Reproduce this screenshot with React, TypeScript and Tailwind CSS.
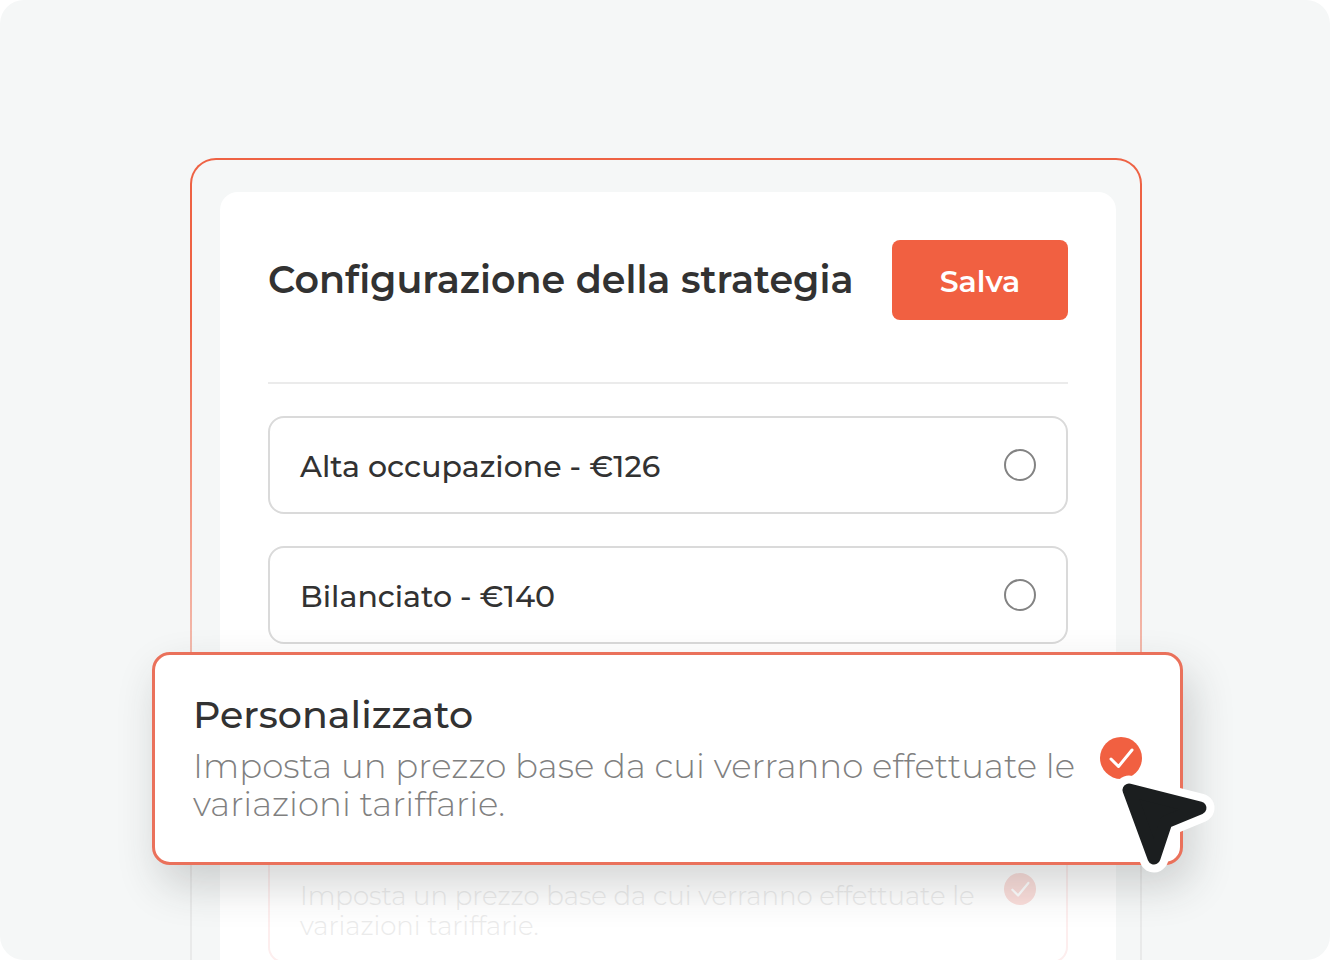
import clsx from "clsx";

const font = 'font-["Montserrat","Inter",sans-serif] [font-variant-ligatures:none]';

function Check({ className }: { className?: string }) {
  return (
    <svg
      viewBox="0 0 42 42"
      fill="none"
      stroke="white"
      strokeWidth={3}
      strokeLinecap="round"
      strokeLinejoin="round"
      aria-hidden="true"
      className={className}
    >
      <path d="M11 22 18.5 29.5 32 13" />
    </svg>
  );
}

function Option({ label, value }: { label: string; value: string }) {
  return (
    <label className="flex items-center justify-between gap-4 px-[30px] pt-[34px] pb-[30px] rounded-2xl border-2 border-[#dadada] cursor-pointer">
      <span className="text-[30px] leading-[30px] font-medium text-[#323232]">{label}</span>
      <input
        type="radio"
        name="strategy"
        value={value}
        className="appearance-none shrink-0 size-8 -mt-2 -mb-1 rounded-full border-2 border-[#838383] bg-white checked:border-[10px] checked:border-[#f16041]"
      />
    </label>
  );
}

function Cursor({ className }: { className?: string }) {
  return (
    <svg
      width="110"
      height="108"
      viewBox="0 0 110 108"
      strokeLinejoin="round"
      aria-hidden="true"
      className={className}
    >
      <path d="M19 20 90 38 56 52 44 88Z" fill="white" stroke="white" strokeWidth={29} />
      <path d="M19 20 90 38 56 52 44 88Z" fill="#1b1e1f" stroke="#1b1e1f" strokeWidth={13} />
    </svg>
  );
}

export default function App() {
  return (
    <main
      className={clsx(
        font,
        "min-h-screen flex flex-col pt-[158px] pl-[190px] pr-[188px] rounded-3xl overflow-hidden bg-[#f5f7f7]"
      )}
    >
      {/* ── Frame, outline fades out downwards ─────────── */}
      <div className="flex-1 flex p-[2px] pb-0 rounded-t-[26px] bg-linear-to-b from-[#ee6244] from-20% via-[#f3a593] via-50% to-[#e9eaea] to-90%">
        <div className="flex-1 flex pt-8 pl-7 pr-6 rounded-t-3xl bg-[#f5f7f7]">
          {/* ── Strategy card ──────────────────────────── */}
          <form className="flex-1 min-w-0 flex flex-col px-12 pt-12 rounded-t-[18px] bg-white">
            <div className="flex items-center justify-between pb-[62px] border-b-2 border-[#ebebeb]">
              <h1 className="text-[38px] leading-[48px] font-semibold text-[#323232] whitespace-nowrap">
                Configurazione della strategia
              </h1>
              <button
                type="button"
                className="shrink-0 w-[176px] h-20 pt-1 rounded-lg bg-[#f16041] text-[30px] leading-9 font-semibold text-white"
              >
                Salva
              </button>
            </div>

            <div className="flex flex-col gap-8 pt-8">
              <Option label="Alta occupazione - €126" value="high" />
              <Option label="Bilanciato - €140" value="balanced" />
            </div>

            {/* ── Selected option, wider than the card ─── */}
            <label className="relative z-10 mt-2 -ml-[116px] -mr-[115px] flex items-center justify-between gap-2 px-[38px] pt-9 pb-[38px] rounded-[18px] border-[3px] border-[#ea715b] bg-white shadow-[8px_20px_44px_rgba(40,44,44,0.2)] cursor-pointer">
              <span className="flex flex-col gap-2">
                <span className="text-[38px] leading-[48px] font-medium text-[#323232]">
                  Personalizzato
                </span>
                <span className="pb-px text-[34px] leading-[38px] font-light text-[#808080]">
                  Imposta un prezzo base da cui verranno effettuate le variazioni tariffarie.
                </span>
              </span>
              <span className="shrink-0 grid size-[42px]">
                <input
                  type="radio"
                  name="strategy"
                  value="custom"
                  defaultChecked
                  className="peer [grid-area:1/1] appearance-none size-full rounded-full border-2 border-[#838383] checked:border-0 checked:bg-[#f16041]"
                />
                <Check className="[grid-area:1/1] size-full pointer-events-none invisible peer-checked:visible" />
              </span>
              <Cursor className="absolute -right-10 -bottom-4 pointer-events-none" />
            </label>

            {/* ── Faded echo of the option underneath ──── */}
            <div aria-hidden="true" className="max-h-[95px] overflow-hidden">
              <div className="flex items-start justify-between px-[30px] pb-5 rounded-b-2xl border-2 border-t-0 border-[#fdeeee]">
                <p className="pt-4 text-[26px] leading-[30px] font-light text-[#ebebeb]">
                  Imposta un prezzo base da cui verranno effettuate le
                  <br />
                  variazioni tariffarie.
                </p>
                <span className="mt-2 shrink-0 size-8 rounded-full bg-[#fbdedb]">
                  <Check className="size-full" />
                </span>
              </div>
            </div>
          </form>
        </div>
      </div>
    </main>
  );
}
